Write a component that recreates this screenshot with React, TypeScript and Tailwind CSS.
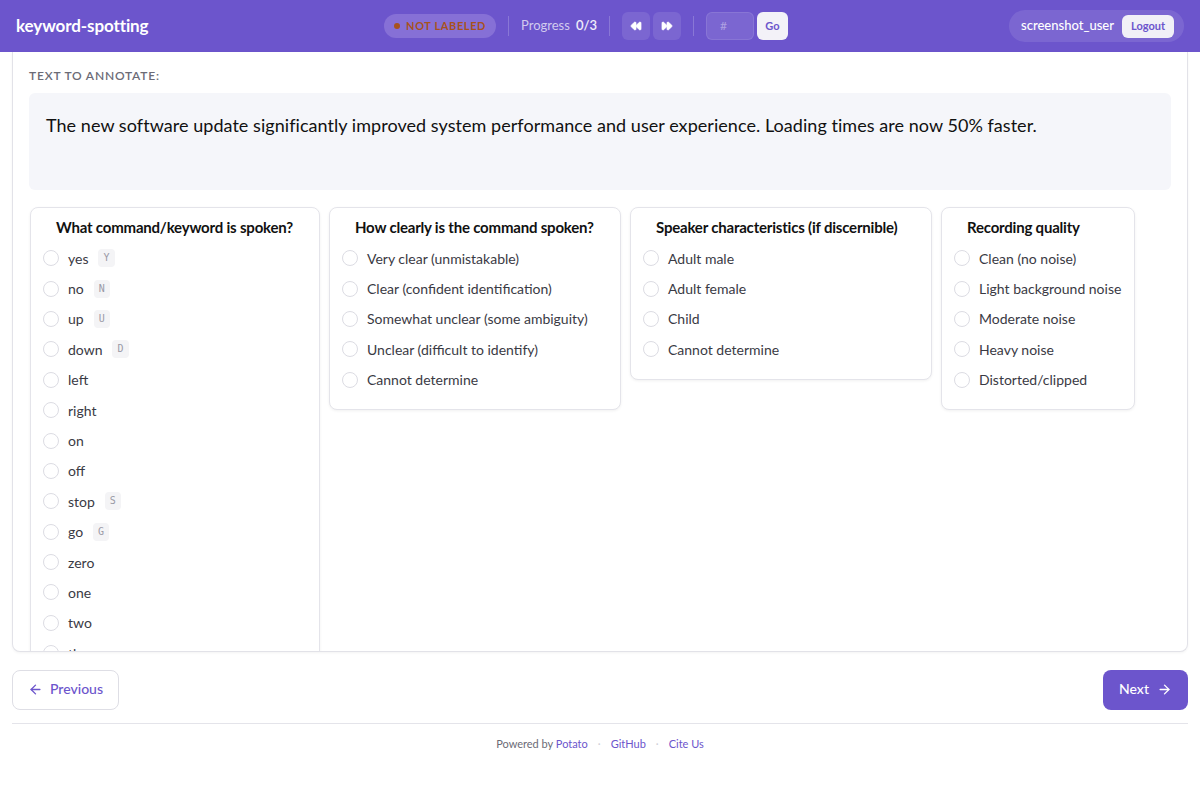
import { ArrowLeft, ArrowRight, Rewind, FastForward } from "lucide-react";

type Option = { label: string; key?: string };

const keywords: Option[] = [
  { label: "yes", key: "Y" },
  { label: "no", key: "N" },
  { label: "up", key: "U" },
  { label: "down", key: "D" },
  { label: "left" },
  { label: "right" },
  { label: "on" },
  { label: "off" },
  { label: "stop", key: "S" },
  { label: "go", key: "G" },
  { label: "zero" },
  { label: "one" },
  { label: "two" },
  { label: "three" },
];

const schemes: { title: string; width: string; options: Option[] }[] = [
  { title: "What command/keyword is spoken?", width: "w-[290px]", options: keywords },
  {
    title: "How clearly is the command spoken?",
    width: "w-[292px]",
    options: [
      { label: "Very clear (unmistakable)" },
      { label: "Clear (confident identification)" },
      { label: "Somewhat unclear (some ambiguity)" },
      { label: "Unclear (difficult to identify)" },
      { label: "Cannot determine" },
    ],
  },
  {
    title: "Speaker characteristics (if discernible)",
    width: "w-[302px]",
    options: [
      { label: "Adult male" },
      { label: "Adult female" },
      { label: "Child" },
      { label: "Cannot determine" },
    ],
  },
  {
    title: "Recording quality",
    width: "w-[194px]",
    options: [
      { label: "Clean (no noise)" },
      { label: "Light background noise" },
      { label: "Moderate noise" },
      { label: "Heavy noise" },
      { label: "Distorted/clipped" },
    ],
  },
];

function SchemeCard({ title, width, options }: { title: string; width: string; options: Option[] }) {
  return (
    <div className={`${width} shrink-0 self-start rounded-lg border border-[#e4e4ea] bg-white pt-[9px] pb-[14px] shadow-[0_1px_3px_rgba(0,0,0,0.06)]`}>
      <h3 className="px-[25px] text-[15px] font-bold text-[#111] leading-[20px] whitespace-nowrap tracking-[-0.2px]">
        {title}
      </h3>
      <div className="mt-[6px] flex flex-col">
        {options.map((o) => (
          <label key={o.label} className="flex h-[30.4px] items-center gap-[9px] pl-[12px] whitespace-nowrap">
            <span className="h-[16px] w-[16px] shrink-0 rounded-full border border-[#dcdce3] bg-white" />
            <span className="text-[14px] text-[#3a3a44]">{o.label}</span>
            {o.key && (
              <span className="ml-[1px] rounded bg-[#f4f4f6] px-[5px] py-[3px] font-['DejaVu_Sans_Mono',monospace] text-[10px] leading-[12px] text-[#9a9aa6]">
                {o.key}
              </span>
            )}
          </label>
        ))}
      </div>
    </div>
  );
}

export default function App() {
  return (
    <div className="min-h-[800px] bg-white font-['Lato','Noto_Sans',sans-serif] text-[#1a1a1a]">
      <header className="flex h-[52px] items-center justify-between bg-[#6c55cc] pl-[16px] pr-[16px] text-white">
        <div className="w-[300px] text-[17px] font-bold tracking-[-0.1px]">keyword-spotting</div>

        <div className="mr-[28px] flex items-center">
          <span className="flex h-[24px] items-center gap-[6px] rounded-full bg-[#8670d6] px-[10px] text-[11px] font-bold tracking-[0.6px] text-[#a8521c]">
            <span className="h-[6px] w-[6px] rounded-full bg-[#a8521c]" />
            NOT LABELED
          </span>
          <span className="mx-[12px] h-[20px] w-px bg-white/20" />
          <span className="text-[13px] text-white/70">Progress</span>
          <span className="ml-[6px] text-[13px] font-semibold text-white/90">0/3</span>
          <span className="mx-[12px] h-[20px] w-px bg-white/20" />
          <div className="flex gap-[3px]">
            <button className="flex h-[28px] w-[28px] items-center justify-center rounded-md bg-white/10">
              <Rewind size={12} fill="currentColor" strokeWidth={1.5} />
            </button>
            <button className="flex h-[28px] w-[28px] items-center justify-center rounded-md bg-white/10">
              <FastForward size={12} fill="currentColor" strokeWidth={1.5} />
            </button>
          </div>
          <span className="mx-[12px] h-[20px] w-px bg-white/20" />
          <div className="flex h-[28px] w-[48px] items-center rounded-md border border-white/10 bg-white/10 pl-[13px] text-[12px] text-white/40">
            #
          </div>
          <button className="ml-[3px] h-[28px] w-[31px] rounded-md bg-[#f3f2f8] text-[11px] font-bold text-[#6c55cc]">
            Go
          </button>
        </div>

        <div className="flex w-[300px] justify-end">
          <div className="flex h-[32px] items-center gap-[8px] rounded-full bg-white/10 pl-[12px] pr-[10px]">
            <span className="text-[13px] font-medium">screenshot_user</span>
            <button className="h-[23px] rounded-md bg-[#f1f0f7] px-[9px] text-[11px] font-bold text-[#6c55cc]">
              Logout
            </button>
          </div>
        </div>
      </header>

      <div className="px-[12px]">
        <main className="h-[600px] overflow-hidden rounded-b-lg border border-t-0 border-[#e2e2e8] bg-white px-[16px] pt-[16px] shadow-[0_1px_3px_rgba(0,0,0,0.05)]">
          <div className="text-[12px] leading-[16px] font-semibold tracking-[0.8px] text-[#6b6b76]">TEXT TO ANNOTATE:</div>
          <div className="mt-[9px] h-[97px] rounded-md bg-[#f5f6fa] px-[17px] pt-[19px] text-[18px] leading-[26px] tracking-[0.05px] text-[#111]">
            The new software update significantly improved system performance and user experience. Loading times are now 50% faster.
          </div>
          <div className="mt-[17px] flex gap-[9px] pl-[1px]">
            {schemes.map((s) => (
              <SchemeCard key={s.title} {...s} />
            ))}
          </div>
        </main>

        <div className="flex items-center justify-between pt-[18px] pb-[13px]">
          <button className="flex h-[40px] items-center gap-[7px] rounded-lg border border-[#dedee5] bg-white px-[15px] pb-[2px] text-[14px] leading-[18px] font-medium text-[#6c55cc]">
            <ArrowLeft size={15} strokeWidth={2.2} />
            Previous
          </button>
          <button className="flex h-[40px] items-center gap-[8px] rounded-lg bg-[#6c55cc] px-[16px] pb-[2px] text-[14px] leading-[18px] font-medium text-white">
            Next
            <ArrowRight size={15} strokeWidth={2.2} />
          </button>
        </div>

        <div className="border-t border-[#e4e4ea] pt-[12px] text-center text-[11px] leading-[16px] text-[#6b6b76]">
          <span>Powered by </span>
          <span className="text-[#6c55cc]">Potato</span>
          <span className="mx-[10px] text-[#d0d0d8]">·</span>
          <span className="text-[#6c55cc]">GitHub</span>
          <span className="mx-[10px] text-[#d0d0d8]">·</span>
          <span className="text-[#6c55cc]">Cite Us</span>
        </div>
      </div>
    </div>
  );
}
